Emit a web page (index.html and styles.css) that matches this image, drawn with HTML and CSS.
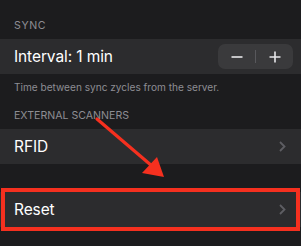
FILE: index.html
```html
<!DOCTYPE html>
<html lang="en">
  <head>
    <meta charset="UTF-8" />
    <title>Settings</title>
    <link rel="stylesheet" href="styles.css">
  </head>
  <body>
    <div class="settings">
      <div class="section-header first">SYNC</div>
      <div class="row">
        <span class="row-label">Interval: 1 min</span>
        <div class="stepper">
          <button class="step-btn" aria-label="decrease">
            <svg width="12" height="12" viewBox="0 0 12 12"><path d="M0.5 6H11.5" stroke="#e8e8ea" stroke-width="1.6"/></svg>
          </button>
          <span class="step-divider"></span>
          <button class="step-btn" aria-label="increase">
            <svg width="12" height="12" viewBox="0 0 12 12"><path d="M0.5 6H11.5M6 0.5V11.5" stroke="#e8e8ea" stroke-width="1.6"/></svg>
          </button>
        </div>
      </div>
      <div class="section-footer">Time between sync zycles from the server.</div>

      <div class="section-header">EXTERNAL SCANNERS</div>
      <div class="row">
        <span class="row-label">RFID</span>
        <svg class="chevron" width="7" height="11" viewBox="0 0 7 11"><path d="M1 1L5.5 5.5L1 10" fill="none" stroke="#5e5e63" stroke-width="1.8"/></svg>
      </div>

      <div class="row reset">
        <span class="row-label">Reset</span>
        <svg class="chevron" width="7" height="11" viewBox="0 0 7 11"><path d="M1 1L5.5 5.5L1 10" fill="none" stroke="#5e5e63" stroke-width="1.8"/></svg>
        <span class="highlight"></span>
      </div>

      <!-- annotation arrow pointing at the reset row -->
      <svg class="arrow" width="301" height="246" viewBox="0 0 301 246">
        <path d="M97 119L152 166" stroke="#f5301f" stroke-width="3.2" stroke-linecap="round"/>
        <path d="M142 173L157 157L164 177Z" fill="#f5301f"/>
      </svg>
    </div>
  </body>
</html>
```

FILE: styles.css
```css
* {
  margin: 0;
  padding: 0;
  box-sizing: border-box;
}

:root {
  --bg: #1c1c1e;
  --row-bg: #2c2c2e;
  --muted: #8d8d93;
  --pad-side: 14px;
  --annotate: #f5301f;
}

body {
  background: var(--bg);
  font-family: 'Inter', 'Noto Sans', sans-serif;
  color: #ffffff;
  width: 301px;
  height: 246px;
  overflow: hidden;
}

.settings {
  position: relative;
  height: 100%;
}

.section-header {
  font-size: 10.6px;
  line-height: 14px;
  color: var(--muted);
  padding: 8px var(--pad-side) 6px;
}

.section-header.first {
  padding-top: 19px;
  padding-bottom: 6px;
  letter-spacing: 0.6px;
}

.row {
  position: relative;
  display: flex;
  align-items: center;
  justify-content: space-between;
  height: 35px;
  padding: 0 var(--pad-side);
  background: var(--row-bg);
}

.row:first-of-type {
  height: 34px;
}

.row-label {
  font-size: 15.5px;
  letter-spacing: -0.1px;
}

.row + .row {
  margin-top: 28px;
}

.chevron {
  margin-right: 1px;
}

/* stepper control sits flush to the right edge */
.stepper {
  display: flex;
  align-items: center;
  width: 75px;
  height: 25px;
  margin-right: -6px;
  background: #3a3a3c;
  border-radius: 7px;
}

.step-btn {
  all: unset;
  flex: 1;
  height: 100%;
  display: flex;
  align-items: center;
  justify-content: center;
}

.step-divider {
  width: 1px;
  height: 13px;
  background: #58585c;
}

.section-footer {
  font-size: 10.1px;
  line-height: 14px;
  color: var(--muted);
  padding: 6px var(--pad-side) 0;
  height: 27px;
}

.highlight {
  position: absolute;
  left: 1px;
  right: 1px;
  top: -4px;
  bottom: -4px;
  border: 4px solid var(--annotate);
}

.arrow {
  position: absolute;
  left: 0;
  top: 0;
  pointer-events: none;
}
```
